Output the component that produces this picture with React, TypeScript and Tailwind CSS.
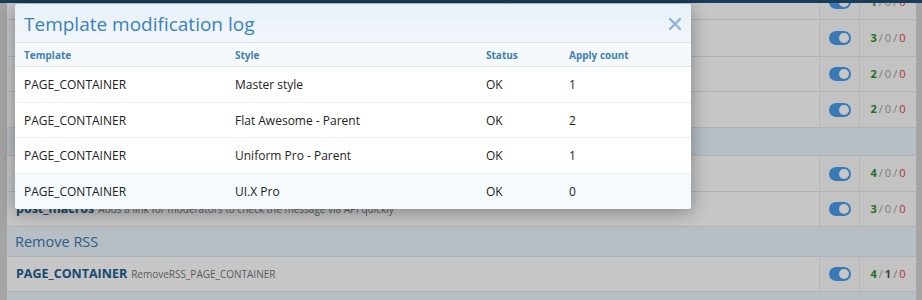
const logRows = [
  { template: 'PAGE_CONTAINER', style: 'Master style', status: 'OK', count: 1 },
  { template: 'PAGE_CONTAINER', style: 'Flat Awesome - Parent', status: 'OK', count: 2 },
  { template: 'PAGE_CONTAINER', style: 'Uniform Pro - Parent', status: 'OK', count: 1 },
  { template: 'PAGE_CONTAINER', style: 'UI.X Pro', status: 'OK', count: 0 },
];

type PageRow =
  | { kind: 'header'; h: string; title: string }
  | { kind: 'row'; h: string; name?: string; desc?: string; counts: [number, number, number] };

const pageRows: PageRow[] = [
  { kind: 'row', h: 'h-[35px]', counts: [1, 0, 0] },
  { kind: 'row', h: 'h-[37px]', counts: [3, 0, 0] },
  { kind: 'row', h: 'h-[35px]', counts: [2, 0, 0] },
  { kind: 'row', h: 'h-[36px]', counts: [2, 0, 0] },
  { kind: 'header', h: 'h-[28px]', title: '' },
  { kind: 'row', h: 'h-[36px]', counts: [4, 0, 0] },
  {
    kind: 'row',
    h: 'h-[35px]',
    name: 'post_macros',
    desc: 'Adds a link for moderators to check the message via API quickly',
    counts: [3, 0, 0],
  },
  { kind: 'header', h: 'h-[30px]', title: 'Remove RSS' },
  {
    kind: 'row',
    h: 'h-[35px]',
    name: 'PAGE_CONTAINER',
    desc: 'RemoveRSS_PAGE_CONTAINER',
    counts: [4, 1, 0],
  },
];

function Toggle() {
  return (
    <div className="w-[22px] h-[14px] rounded-full bg-[#4a9cec] flex items-center justify-end pr-[2px]">
      <div className="w-[10px] h-[10px] rounded-full bg-white" />
    </div>
  );
}

function Counts({ counts }: { counts: [number, number, number] }) {
  return (
    <span className="text-[11px] text-[#a0a0a0] whitespace-nowrap">
      <span className="font-bold text-[#2d8f2d]">{counts[0]}</span>
      <span className="px-[2px]">/</span>
      <span className={counts[1] > 0 ? 'font-bold text-[#555]' : ''}>{counts[1]}</span>
      <span className="px-[2px]">/</span>
      <span className="text-[#e04848]">{counts[2]}</span>
    </span>
  );
}

function BackgroundPage() {
  return (
    <div className="h-[300px] flex flex-col bg-[#d3d3d3]">
      <div className="h-[3px] bg-[#1f4d72] shrink-0" />
      <div className="flex-1 overflow-hidden pl-[7px] pr-[5px]">
        <div className="-mt-[18px] bg-[#ebf4fb] border-r border-[#d8d8d8] h-[340px]">
          {pageRows.map((row, i) =>
            row.kind === 'header' ? (
              <div
                key={i}
                className={`${row.h} flex items-center pl-[8px] pt-[1px] bg-[#ebf4fb] border-b border-[#dde6ee] text-[14.5px] text-[#3a79b0]`}
              >
                {row.title}
              </div>
            ) : (
              <div key={i} className={`${row.h} flex bg-[#fefefe] border-b border-[#e5e5e5]`}>
                <div className="flex-1 flex items-center pl-[9px] pt-[1px] gap-[4px] whitespace-nowrap">
                  {row.name && <span className="text-[12.5px] font-bold text-[#1d5d91]">{row.name}</span>}
                  {row.desc && <span className="text-[10px] text-[#777]">{row.desc}</span>}
                </div>
                <div className="w-[40px] flex items-center justify-center border-l border-[#ececec] bg-[#fafafa]">
                  <Toggle />
                </div>
                <div className="w-[57px] flex items-center justify-center border-l border-[#ececec] bg-[#fafafa]">
                  <Counts counts={row.counts} />
                </div>
              </div>
            )
          )}
        </div>
      </div>
    </div>
  );
}

export default function App() {
  return (
    <div className="relative w-[922px] h-[300px] overflow-hidden font-['Segoe_UI','Open_Sans',sans-serif]">
      <BackgroundPage />
      <div className="absolute inset-0 bg-black/[0.22]" />

      <div className="absolute left-[15px] top-[4px] w-[676px] bg-white rounded-[3px] overflow-hidden shadow-[0_3px_18px_rgba(0,0,0,0.35)]">
        <div className="h-[39px] flex items-center justify-between pl-[9px] pr-[9px] pt-[3px] bg-gradient-to-b from-[#e7f0f8] to-[#f2f7fb] border-b border-[#d6e3ee]">
          <h2 className="text-[19px] leading-none text-[#3a82bd]">Template modification log</h2>
          <svg width="14" height="14" viewBox="0 0 14 14" className="text-[#8eb4d6] -mt-[1px]">
            <path d="M2 2 L12 12 M12 2 L2 12" stroke="currentColor" strokeWidth="2.4" strokeLinecap="round" />
          </svg>
        </div>

        <div className="h-[24px] flex items-center pt-[2px] bg-[#f6f9fc] border-b border-[#dbe5ee] text-[10px] font-bold text-[#3d7fb8]">
          <div className="w-[220px] pl-[9px]">Template</div>
          <div className="w-[251px]">Style</div>
          <div className="w-[83px]">Status</div>
          <div className="flex-1">Apply count</div>
        </div>

        {logRows.map((row, i) => (
          <div
            key={i}
            className={`h-[35.5px] flex items-center pt-[2px] text-[12px] text-[#222] ${
              i === logRows.length - 1 ? 'bg-[#f5fafd]' : 'border-b border-[#e9eef3]'
            }`}
          >
            <div className="w-[220px] pl-[9px]">{row.template}</div>
            <div className="w-[251px]">{row.style}</div>
            <div className="w-[83px]">{row.status}</div>
            <div className="flex-1">{row.count}</div>
          </div>
        ))}
      </div>
    </div>
  );
}
